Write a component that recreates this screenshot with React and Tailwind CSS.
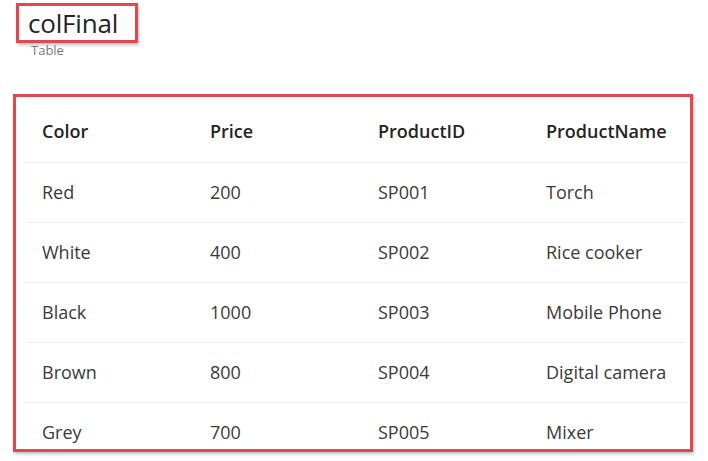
export default function App() {
  const rows = [
    ["Red", "200", "SP001", "Torch"],
    ["White", "400", "SP002", "Rice cooker"],
    ["Black", "1000", "SP003", "Mobile Phone"],
    ["Brown", "800", "SP004", "Digital camera"],
    ["Grey", "700", "SP005", "Mixer"],
  ];
  const f = { fontFamily: '"Open Sans", "Noto Sans", sans-serif' };
  return (
    <div className="w-[708px] h-[461px] bg-white relative overflow-hidden" style={f}>
      <div className="ml-[16px] mt-[3px] w-[122px] h-[40px] border-[3px] border-[#e2474c] shadow-[1px_2px_3px_rgba(0,0,0,0.25)] flex items-center pl-[9px]">
        <span className="text-[26px] leading-none text-[#252423] font-medium tracking-[-0.2px]">colFinal</span>
      </div>
      <div className="ml-[31px] mt-[-1px] text-[13px] leading-[16px] text-[#7a7a7a]">Table</div>
      <div className="ml-[13px] mt-[36px] w-[680px] h-[358px] border-[3px] border-[#e2474c] shadow-[1px_2px_3px_rgba(0,0,0,0.25)] overflow-hidden pl-[10px] pr-[4px]">
        <div className="h-[66px] flex items-center border-b border-[#ececec] pt-[3px]">
          {["Color", "Price", "ProductID", "ProductName"].map((h) => (
            <div key={h} className="w-[168px] shrink-0 pl-[16px] text-[18px] font-semibold text-[#252423] whitespace-nowrap">{h}</div>
          ))}
        </div>
        {rows.map((r, i) => (
          <div key={i} className="h-[60px] flex items-center border-b border-[#ececec]">
            {r.map((c, j) => (
              <div key={j} className="w-[168px] shrink-0 pl-[16px] text-[18px] text-[#3b3a39] whitespace-nowrap">{c}</div>
            ))}
          </div>
        ))}
      </div>
    </div>
  );
}
